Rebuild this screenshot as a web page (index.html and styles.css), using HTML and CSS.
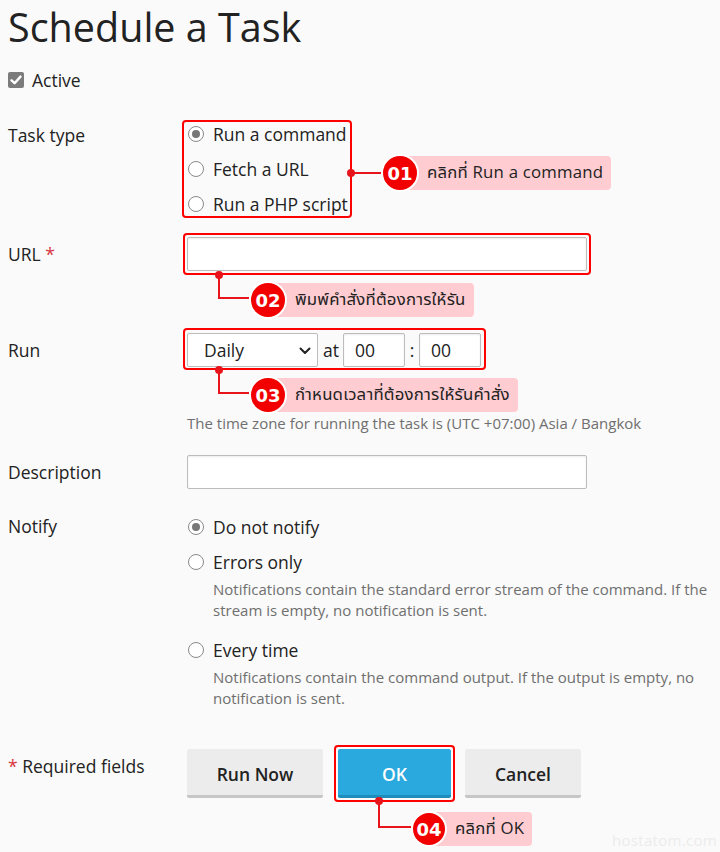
FILE: index.html
```html
<!DOCTYPE html>
<html>
<head>
<meta charset="utf-8">
<link rel="stylesheet" href="styles.css">
</head>
<body>
<div class="page">
  <h1 class="title">Schedule a Task</h1>

  <div class="active-row">
    <span class="checkbox"><svg width="16" height="16" viewBox="0 0 16 16"><path d="M3.5 8.3 L6.6 11.2 L12.5 4.6" fill="none" stroke="#fff" stroke-width="2.4" stroke-linecap="round" stroke-linejoin="round"/></svg></span>
    <span>Active</span>
  </div>

  <div class="row row-type">
    <div class="label">Task type</div>
    <div class="field">
      <div class="outline outline-type">
        <div class="opt"><span class="radio checked"></span>Run a command</div>
        <div class="opt"><span class="radio"></span>Fetch a URL</div>
        <div class="opt"><span class="radio"></span>Run a PHP script</div>
      </div>
    </div>
  </div>

  <div class="row row-url">
    <div class="label">URL <span class="req">*</span></div>
    <div class="field">
      <div class="outline outline-input"><div class="input input-wide"></div></div>
    </div>
  </div>

  <div class="row row-run">
    <div class="label">Run</div>
    <div class="field">
      <div class="outline outline-run">
        <div class="select">Daily<svg class="chev" width="12" height="8" viewBox="0 0 12 8"><path d="M1.5 1.5 L6 6 L10.5 1.5" fill="none" stroke="#222" stroke-width="2" stroke-linecap="round" stroke-linejoin="round"/></svg></div>
        <span class="at">at</span>
        <div class="input input-time">00</div>
        <span class="colon">:</span>
        <div class="input input-time">00</div>
      </div>
    </div>
  </div>

  <div class="row row-hint">
    <div></div>
    <div class="hint">The time zone for running the task is (UTC +07:00) Asia / Bangkok</div>
  </div>

  <div class="row row-desc">
    <div class="label">Description</div>
    <div class="field"><div class="input input-wide desc"></div></div>
  </div>

  <div class="row row-notify">
    <div class="label">Notify</div>
    <div class="field">
      <div class="opt"><span class="radio checked"></span>Do not notify</div>
      <div class="opt"><span class="radio"></span>Errors only</div>
      <div class="hint sub">Notifications contain the standard error stream of the command. If the stream is empty, no notification is sent.</div>
      <div class="opt opt-gap"><span class="radio"></span>Every time</div>
      <div class="hint sub">Notifications contain the command output. If the output is empty, no notification is sent.</div>
    </div>
  </div>

  <div class="row row-footer">
    <div class="label"><span class="req">*</span> Required fields</div>
    <div class="buttons">
      <div class="btn btn-run">Run Now</div>
      <div class="outline outline-ok"><div class="btn btn-ok">OK</div></div>
      <div class="btn btn-cancel">Cancel</div>
    </div>
  </div>

  <!-- callouts -->
  <div class="callout c1">
    <span class="hline"></span>
    <span class="badge">01</span>
    <span class="pill">คลิกที่ Run a command</span>
  </div>
  <div class="callout c2">
    <span class="elbow"></span>
    <span class="badge">02</span>
    <span class="pill">พิมพ์คำสั่งที่ต้องการให้รัน</span>
  </div>
  <div class="callout c3">
    <span class="elbow"></span>
    <span class="badge">03</span>
    <span class="pill">กำหนดเวลาที่ต้องการให้รันคำสั่ง</span>
  </div>
  <div class="callout c4">
    <span class="elbow elbow4"></span>
    <span class="badge">04</span>
    <span class="pill">คลิกที่ OK</span>
  </div>

  <div class="watermark">hostatom.com</div>
</div>
</body>
</html>
```

FILE: styles.css
```css
html, body {
  margin: 0;
  padding: 0;
  background: #fafafa;
}
body {
  font-family: "Open Sans", "Noto Sans", "Noto Sans Thai", "Tahoma", sans-serif;
  color: #222;
  font-size: 17.5px;
}
.page {
  position: relative;
  width: 720px;
  height: 852px;
  padding-left: 8px;
  box-sizing: border-box;
  overflow: hidden;
}
.title {
  margin: 0;
  font-size: 39.5px;
  font-weight: 400;
  line-height: 54px;
}
.active-row {
  margin-top: 8px;
  height: 36px;
  display: flex;
  align-items: center;
  gap: 8px;
}
.checkbox {
  width: 16px;
  height: 16px;
  border-radius: 2px;
  background: #7b7b7b;
  display: block;
}
.checkbox svg { display: block; }

.row {
  display: grid;
  grid-template-columns: 179px 1fr;
  align-items: start;
}
.label {
  line-height: 34px;
  white-space: nowrap;
}
.row-type { margin-top: 22px; }
.row-type .label { line-height: 24px; padding-top: 3px; }
.row-url { margin-top: 19px; }
.row-run { margin-top: 62px; }
.row-hint { margin-top: 46px; }
.row-desc { margin-top: 21px; }
.row-notify { margin-top: 20px; }
.row-notify .label { line-height: 35px; }
.row-footer { margin-top: 40px; }

.req { color: #d9363e; }

.opt {
  display: flex;
  align-items: center;
  height: 35px;
  gap: 9px;
  padding-left: 1px;
  white-space: nowrap;
}
.opt-gap { margin-top: 11px; }
.radio {
  width: 16px;
  height: 16px;
  border: 1px solid #8a8a8a;
  border-radius: 50%;
  background: #fff;
  box-sizing: border-box;
  position: relative;
  flex: none;
}
.radio.checked::after {
  content: "";
  position: absolute;
  left: 3px;
  top: 3px;
  width: 8px;
  height: 8px;
  border-radius: 50%;
  background: #777;
}

.outline {
  border: 2px solid #f00;
  border-radius: 4px;
  box-sizing: border-box;
}
.outline-type {
  margin-left: -5px;
  width: 170px;
  padding: 0 0 0 3px;
  display: flex;
  flex-direction: column;
  gap: 11px;
}
.outline-type .opt { height: 24px; }
.outline-input {
  margin-left: -4px;
  margin-top: -4px;
  width: 408px;
  padding: 2px;
  margin-bottom: -4px;
}
.input {
  height: 34px;
  background: #fff;
  border: 1px solid #bcbcbc;
  border-radius: 2px;
  box-sizing: border-box;
  box-shadow: inset 0 1px 2px rgba(0,0,0,0.08);
}
.input-wide { width: 400px; }
.outline-run {
  margin-left: -4px;
  margin-top: -5px;
  width: 303px;
  padding: 3px 2px 1px 2px;
  margin-bottom: -3px;
  display: flex;
  align-items: center;
}
.select {
  width: 131px;
  height: 34px;
  border: 1px solid #bcbcbc;
  border-radius: 2px;
  box-sizing: border-box;
  background: #fff;
  padding-left: 16px;
  display: flex;
  align-items: center;
  position: relative;
}
.chev {
  position: absolute;
  right: 6px;
  top: 13px;
}
.at { margin: 0 4px 0 5px; }
.input-time {
  width: 62px;
  display: flex;
  align-items: center;
  padding-left: 11px;
}
.colon { width: 14px; text-align: center; }

.hint {
  font-size: 15px;
  line-height: 21px;
  color: #6f6f6f;
}
.sub { padding-left: 26px; }

.buttons {
  display: flex;
  gap: 15px;
  align-items: flex-start;
}
.btn {
  height: 49px;
  box-sizing: border-box;
  border-bottom: 3px solid #c6c6c6;
  background: #ececec;
  display: flex;
  align-items: center;
  justify-content: center;
  font-weight: 600;
  border-radius: 2px;
  padding-top: 3px;
}
.btn-run { width: 136px; }
.btn-cancel { width: 116px; margin-left: -1px; }
.outline-ok {
  margin: -4px -4px;
  padding: 2px;
  border-width: 2px;
}
.btn-ok {
  width: 113px;
  background: #29a9dd;
  border-bottom-color: #1e8dbb;
  color: #fff;
}

/* callouts */
.callout {
  position: absolute;
  display: flex;
  align-items: center;
}
.badge {
  position: relative;
  z-index: 2;
  width: 34px;
  height: 34px;
  border-radius: 50%;
  background: #f20000;
  border: 2px solid #fff;
  color: #fff;
  font-family: "DejaVu Sans", "Open Sans", sans-serif;
  font-weight: 700;
  font-size: 18px;
  display: flex;
  align-items: center;
  justify-content: center;
  flex: none;
}
.pill {
  height: 34px;
  background: #ffccd1;
  border-radius: 4px;
  margin-left: -14px;
  padding-left: 22px;
  padding-right: 8px;
  display: flex;
  align-items: center;
  font-size: 16.8px;
  color: #222;
  letter-spacing: 0.2px;
  white-space: nowrap;
}
.hline {
  position: relative;
  width: 30px;
  height: 2px;
  background: #e8141b;
}
.hline::before {
  content: "";
  position: absolute;
  left: -4px;
  top: -3px;
  width: 8px;
  height: 8px;
  border-radius: 50%;
  background: #e8141b;
}
.elbow {
  position: relative;
  width: 31px;
  height: 24px;
  border-left: 2px solid #e8141b;
  border-bottom: 2px solid #e8141b;
  box-sizing: border-box;
  align-self: flex-start;
}
.elbow::before {
  content: "";
  position: absolute;
  left: -5px;
  top: -4px;
  width: 8px;
  height: 8px;
  border-radius: 50%;
  background: #e8141b;
}
.c1 { left: 351px; top: 154px; }
.c2 { left: 218px; top: 275px; }
.c3 { left: 218px; top: 370px; }
.c4 { left: 378px; top: 801px; }
.c2 .badge, .c3 .badge { margin-top: 6px; }
.c2 .pill, .c3 .pill { margin-top: 6px; }
.elbow4 { width: 33px; height: 27px; }
.c4 .badge { width: 32px; height: 32px; margin-top: 10px; }
.c4 .pill { margin-top: 10px; }

.watermark {
  position: absolute;
  right: 3px;
  bottom: 2px;
  font-size: 15px;
  color: #ececec;
  letter-spacing: 0.3px;
}
```
